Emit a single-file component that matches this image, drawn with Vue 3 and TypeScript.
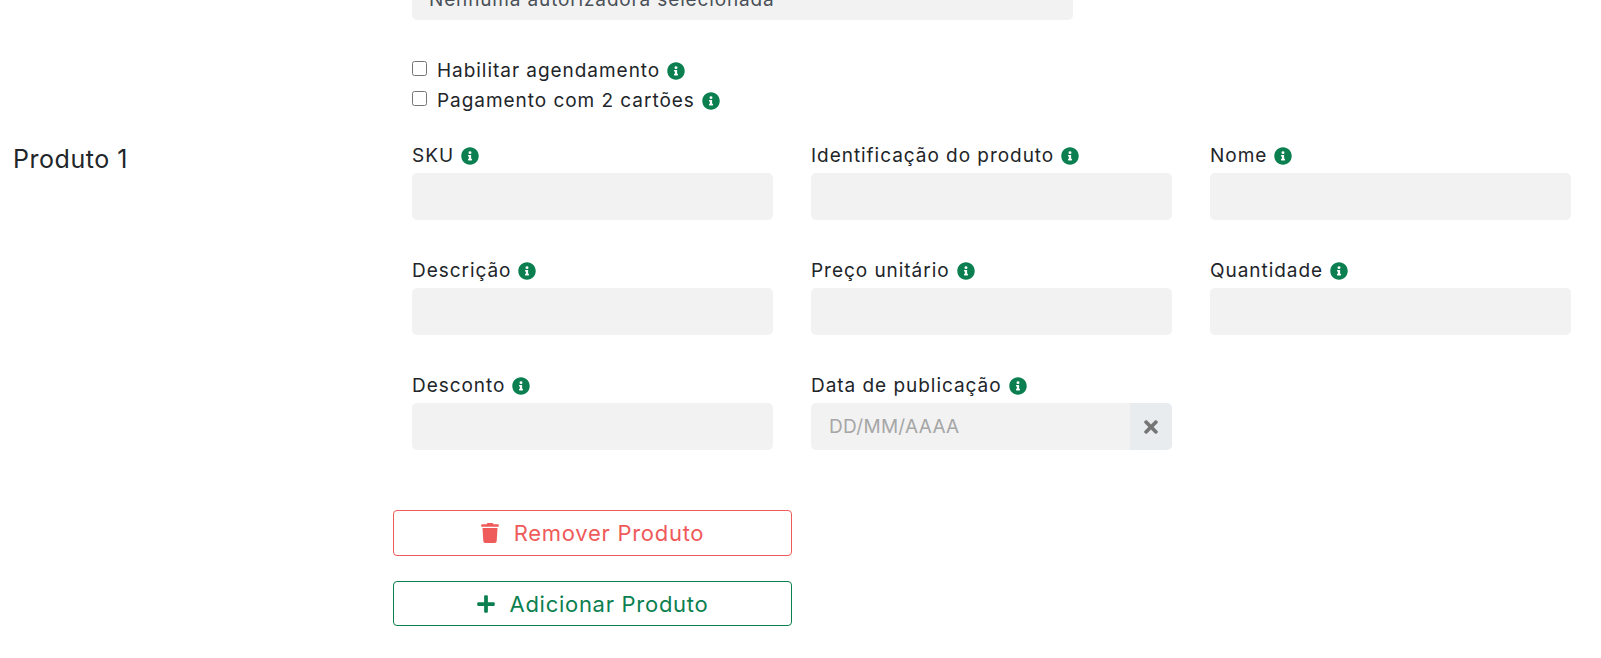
<script setup lang="ts">
const fields: { label: string; date?: boolean }[] = [
  { label: 'SKU' },
  { label: 'Identificação do produto' },
  { label: 'Nome' },
  { label: 'Descrição' },
  { label: 'Preço unitário' },
  { label: 'Quantidade' },
  { label: 'Desconto' },
  { label: 'Data de publicação', date: true },
]
const checks = ['Habilitar agendamento', 'Pagamento com 2 cartões']
</script>

<template>
  <div class="page">
    <div class="offset">
      <div class="select-clip">
        <div class="select">Nenhuma autorizadora selecionada</div>
      </div>
      <div class="checks">
        <label v-for="c in checks" :key="c" class="check">
          <input type="checkbox" />
          <span>{{ c }}</span>
          <svg class="info" viewBox="0 0 512 512"><path fill="#0b7f4f" d="M256 8C119 8 8 119 8 256s111 248 248 248 248-111 248-248S393 8 256 8zm0 110a42 42 0 1 1 0 84 42 42 0 0 1 0-84zm56 254c0 7-5 12-12 12h-88c-7 0-12-5-12-12v-24c0-7 5-12 12-12h12v-64h-12c-7 0-12-5-12-12v-24c0-7 5-12 12-12h64c7 0 12 5 12 12v100h12c7 0 12 5 12 12z"/></svg>
        </label>
      </div>
    </div>

    <div class="product">
      <h2 class="title">Produto 1</h2>
      <div class="grid">
        <div v-for="f in fields" :key="f.label" class="field">
          <div class="label">
            <span>{{ f.label }}</span>
            <svg class="info" viewBox="0 0 512 512"><path fill="#0b7f4f" d="M256 8C119 8 8 119 8 256s111 248 248 248 248-111 248-248S393 8 256 8zm0 110a42 42 0 1 1 0 84 42 42 0 0 1 0-84zm56 254c0 7-5 12-12 12h-88c-7 0-12-5-12-12v-24c0-7 5-12 12-12h12v-64h-12c-7 0-12-5-12-12v-24c0-7 5-12 12-12h64c7 0 12 5 12 12v100h12c7 0 12 5 12 12z"/></svg>
          </div>
          <div v-if="f.date" class="date">
            <input class="input date-input" placeholder="DD/MM/AAAA" />
            <span class="clear">
              <svg viewBox="0 0 352 512" width="14" height="20"><path fill="#757575" d="M242.7 256l100-100c12.300-12.300 12.300-32.200 0-44.500l-22.200-22.200c-12.300-12.300-32.200-12.300-44.500 0L176 189.300 76 89.300c-12.300-12.300-32.200-12.300-44.500 0L9.300 111.500c-12.300 12.300-12.300 32.200 0 44.500l100 100-100 100c-12.300 12.300-12.300 32.200 0 44.500l22.200 22.200c12.300 12.300 32.200 12.300 44.500 0l100-100 100 100c12.300 12.300 32.200 12.300 44.500 0l22.200-22.200c12.300-12.300 12.300-32.200 0-44.500L242.700 256z"/></svg>
            </span>
          </div>
          <input v-else class="input" />
        </div>
      </div>
    </div>

    <div class="actions">
      <button class="btn danger">
        <svg viewBox="0 0 448 512" width="18" height="20"><path fill="#ef5a5a" d="M432 32H312l-9.400-18.700A24 24 0 0 0 281.100 0H166.800a23.700 23.700 0 0 0-21.400 13.300L136 32H16A16 16 0 0 0 0 48v32a16 16 0 0 0 16 16h416a16 16 0 0 0 16-16V48a16 16 0 0 0-16-16zM53.200 467a48 48 0 0 0 47.900 45h245.800a48 48 0 0 0 47.900-45L416 128H32z"/></svg>
        <span>Remover Produto</span>
      </button>
      <button class="btn success">
        <svg viewBox="0 0 448 512" width="18" height="20"><path fill="#0b7f4f" d="M416 208H272V64c0-17.700-14.300-32-32-32h-32c-17.700 0-32 14.300-32 32v144H32c-17.700 0-32 14.300-32 32v32c0 17.700 14.300 32 32 32h144v144c0 17.700 14.300 32 32 32h32c17.700 0 32-14.300 32-32V304h144c17.700 0 32-14.300 32-32v-32c0-17.700-14.300-32-32-32z"/></svg>
        <span>Adicionar Produto</span>
      </button>
    </div>
  </div>
</template>

<style>
html, body { background: #fff; overflow: hidden; }
</style>

<style scoped>
.page {
  width: 1601px;
  height: 658px;
  overflow: hidden;
  font-family: Inter, "Liberation Sans", sans-serif;
  font-weight: 400;
  color: #212529;
}
.offset { padding-left: 412px; }
.select-clip {
  height: 20px;
  display: flex;
  align-items: flex-end;
  overflow: hidden;
}
.select {
  flex: none;
  width: 661px;
  height: 47px;
  box-sizing: border-box;
  padding: 3px 17px 0;
  background: #f2f2f2;
  border-radius: 5px;
  line-height: 47px;
  font-size: 19px;
  letter-spacing: 0.85px;
  color: #495057;
}
.checks {
  display: flex;
  flex-direction: column;
  padding-top: 38px;
  gap: 5px;
}
.check {
  display: flex;
  align-items: center;
  height: 25px;
  font-size: 19px;
  letter-spacing: 0.96px;
}
.check input {
  width: 15px;
  height: 15px;
  margin: 0 10px 4px 0;
}
.check .info { margin-left: 7px; }
.info { width: 18px; height: 18px; flex: none; }
.product {
  display: flex;
  margin-top: 29px;
  padding-left: 13px;
}
.title {
  width: 399px;
  margin: 0;
  padding-top: 3px;
  font-size: 25px;
  font-weight: 400;
  line-height: 28px;
  letter-spacing: 0.53px;
  color: #212529;
}
.grid {
  display: grid;
  grid-template-columns: repeat(3, 361px);
  column-gap: 38px;
  row-gap: 37px;
}
.field { display: flex; flex-direction: column; }
.label {
  display: flex;
  align-items: center;
  gap: 7px;
  height: 25px;
  margin: 1px 0 5px;
  font-size: 19px;
  letter-spacing: 0.96px;
}
.input {
  width: 100%;
  height: 47px;
  box-sizing: border-box;
  border: none;
  outline: none;
  border-radius: 5px;
  background: #f2f2f2;
  padding: 0 18px;
  font: inherit;
  font-size: 19px;
  letter-spacing: 0.3px;
}
.input::placeholder { color: #a6a6a6; opacity: 1; }
.date { display: flex; }
.date-input { flex: 1; min-width: 0; border-radius: 5px 0 0 5px; }
.clear {
  width: 42px;
  height: 47px;
  flex: none;
  display: flex;
  align-items: center;
  justify-content: center;
  background: #e9ecef;
  border-radius: 0 5px 5px 0;
}
.actions {
  display: flex;
  flex-direction: column;
  gap: 25px;
  margin: 60px 0 0 393px;
}
.btn {
  width: 399px;
  display: flex;
  align-items: center;
  justify-content: center;
  gap: 15px;
  background: #fff;
  border: 1px solid;
  border-radius: 4px;
  font: inherit;
  font-size: 22px;
  letter-spacing: 0.72px;
}
.danger { height: 46px; color: #ef5a5a; border-color: #ef5a5a; }
.success { height: 45px; color: #0b7f4f; border-color: #0b7f4f; }
</style>
